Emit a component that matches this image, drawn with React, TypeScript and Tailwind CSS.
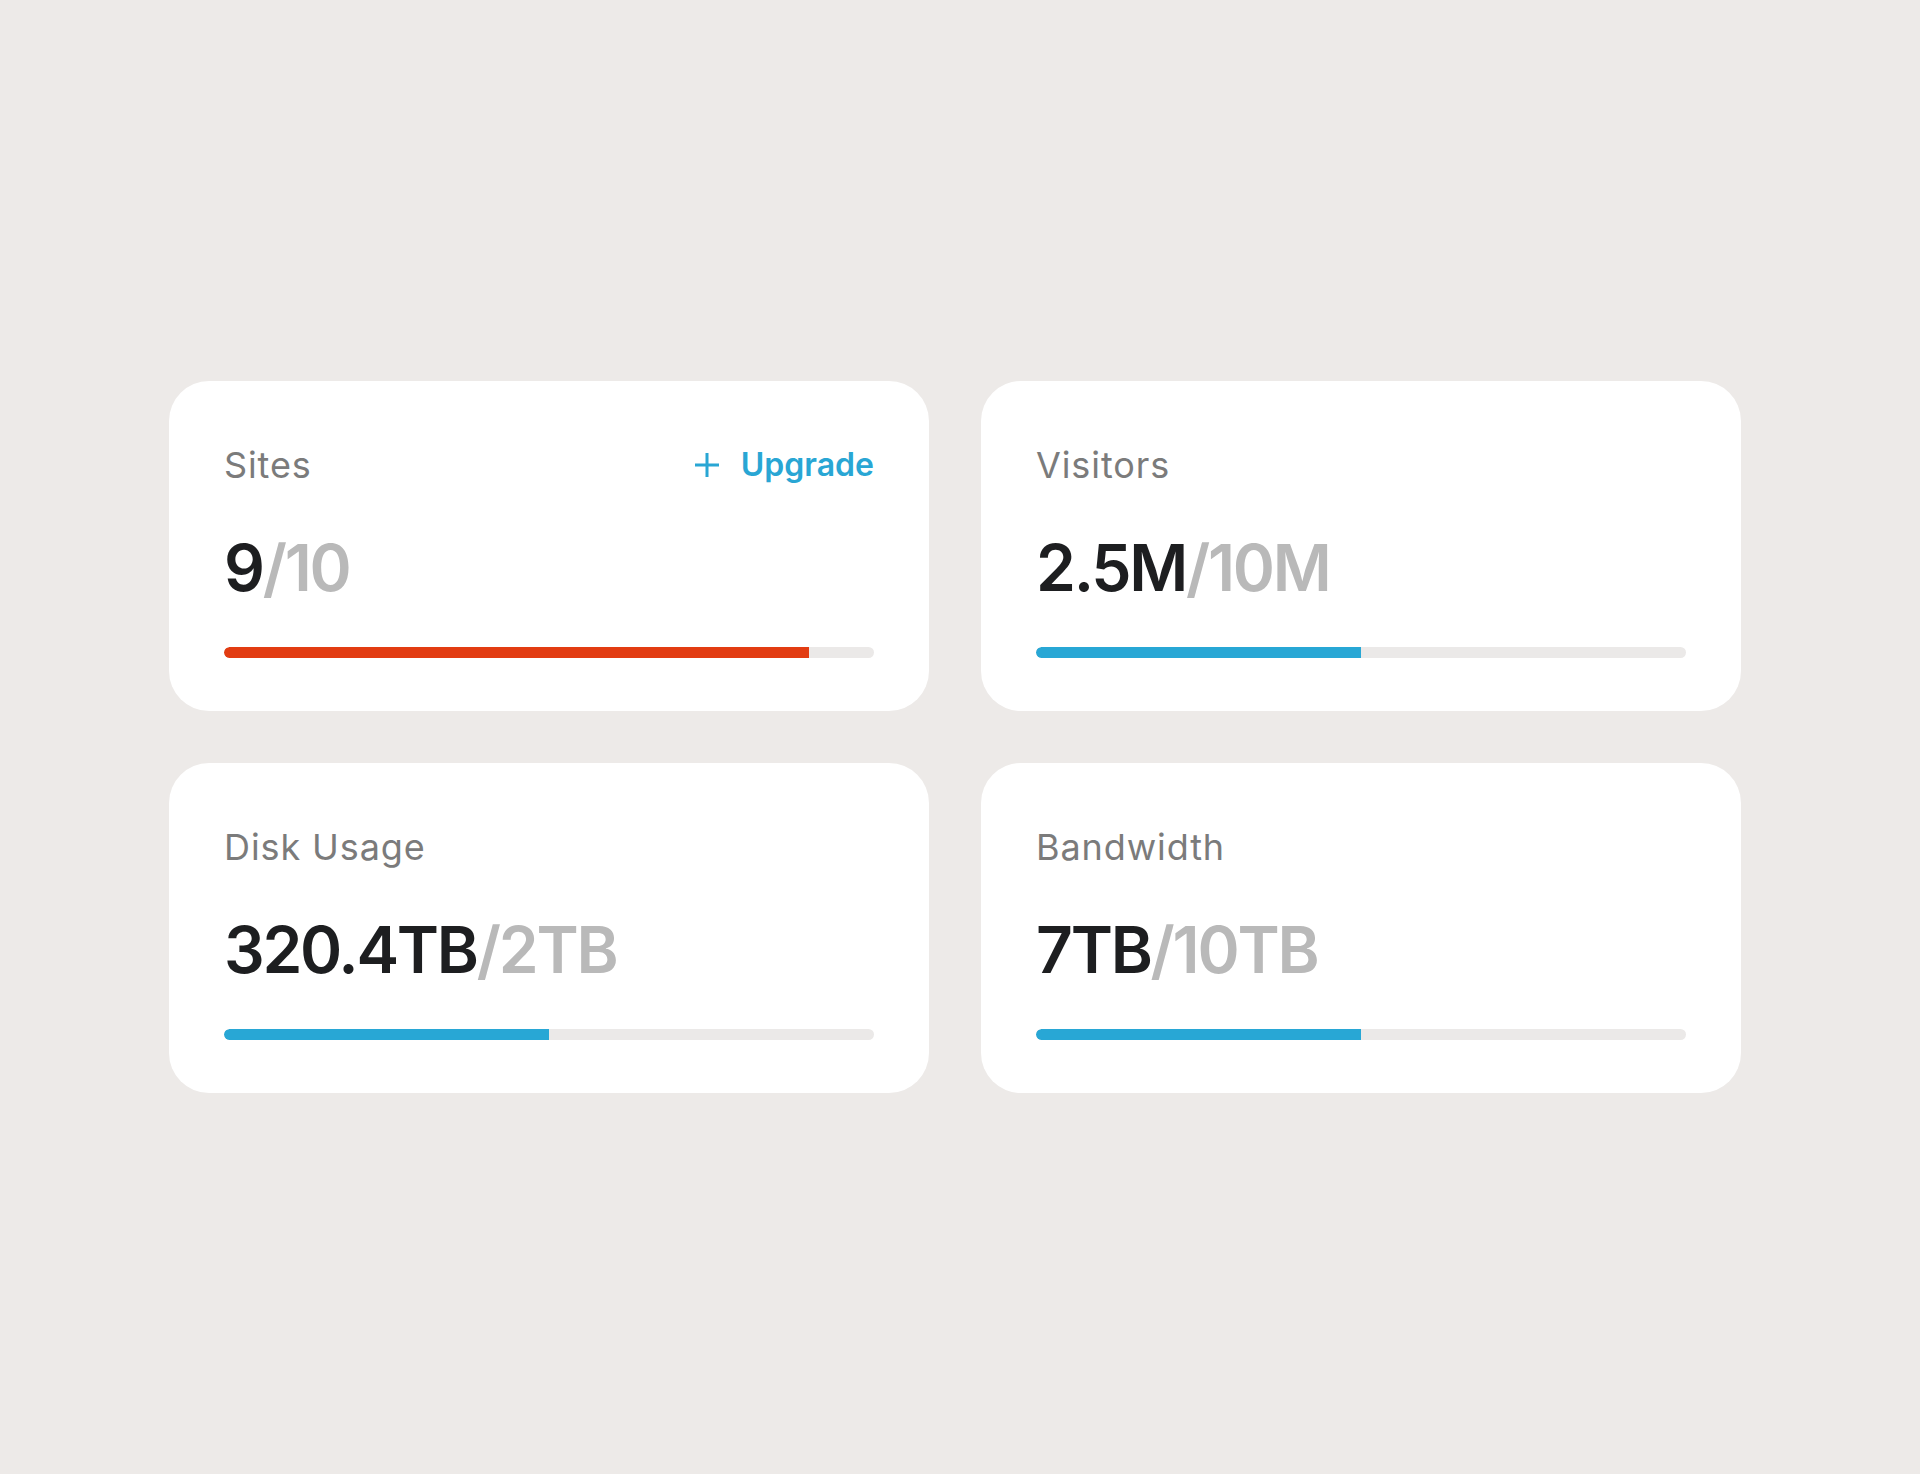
type Stat = {
  label: string;
  used: string;
  total: string;
  pct: number;
  bar: "red" | "blue";
  upgrade?: boolean;
};

const stats: Stat[] = [
  { label: "Sites", used: "9", total: "/10", pct: 90, bar: "red", upgrade: true },
  { label: "Visitors", used: "2.5M", total: "/10M", pct: 50, bar: "blue" },
  { label: "Disk Usage", used: "320.4TB", total: "/2TB", pct: 50, bar: "blue" },
  { label: "Bandwidth", used: "7TB", total: "/10TB", pct: 50, bar: "blue" },
];

function PlusIcon() {
  return (
    <svg width="26" height="26" viewBox="0 0 26 26" fill="none" stroke="currentColor" strokeWidth="3">
      <path d="M13 1v24M1 13h24" />
    </svg>
  );
}

function StatCard({ stat }: { stat: Stat }) {
  return (
    <div className="bg-white rounded-[40px] px-[55px] pt-[62px] pb-[53px]">
      {/* Header */}
      <div className="flex items-center justify-between h-[44px]">
        <span className="text-[36px] leading-[44px] tracking-[0.025em] text-[#7b7b7b]">{stat.label}</span>
        {stat.upgrade && (
          <button className="flex items-center gap-[21px] text-[#29a6d4] text-[32px] leading-[44px] font-semibold">
            <PlusIcon />
            Upgrade
          </button>
        )}
      </div>

      {/* Value */}
      <div className="mt-[45px] text-[64px] leading-[72px] font-semibold tracking-[-0.035em]">
        <span className="text-[#1d1e20]">{stat.used}</span>
        <span className="text-[#b9b9b9]">{stat.total}</span>
      </div>

      {/* Usage bar */}
      <div className="mt-[43px] h-[11px] rounded-full bg-[#ebe9e8] overflow-hidden">
        <div
          className={`h-full rounded-l-full ${stat.bar === "red" ? "bg-[#e23c12]" : "bg-[#28a7d5]"}`}
          style={{ width: `${stat.pct}%` }}
        />
      </div>
    </div>
  );
}

export default function App() {
  return (
    <div
      className="h-[1474px] w-full bg-[#edeae8] flex items-center pl-[169px]"
      style={{ fontFamily: "Inter, 'Noto Sans', sans-serif" }}
    >
      <div className="grid grid-cols-[760px_760px] gap-[52px]">
        {stats.map((s) => (
          <StatCard key={s.label} stat={s} />
        ))}
      </div>
    </div>
  );
}
